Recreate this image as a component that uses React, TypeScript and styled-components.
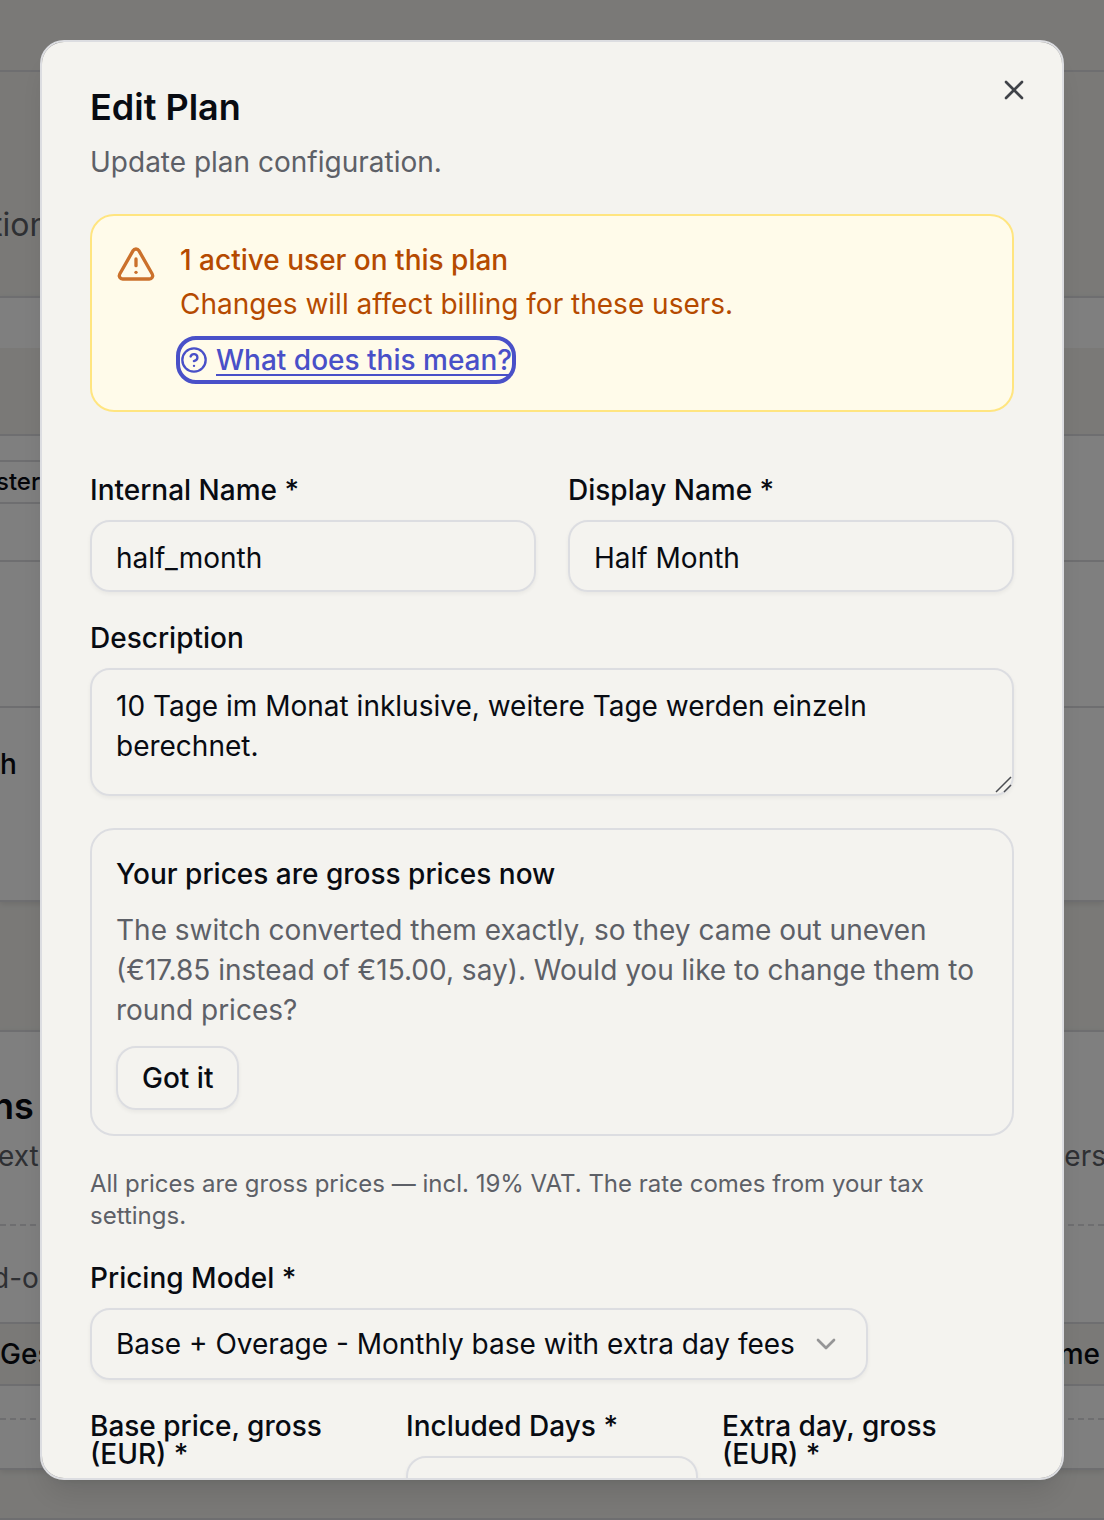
import React from "react";
import styled, { createGlobalStyle, css } from "styled-components";
import { ChevronDown, CircleHelp, TriangleAlert, X } from "lucide-react";

const color = {
  page: "#f4f3ef",
  card: "#ffffff",
  line: "#dcdde1",
  ink: "#080b12",
  muted: "#5d6067",
  amber: "#b54a00",
  amberIcon: "#cb712c",
  amberLine: "#ffe580",
  amberFill: "#fffbea",
  accent: "#4950c8",
};

const GlobalStyle = createGlobalStyle`
  *, *::before, *::after { box-sizing: border-box; }
  body {
    margin: 0;
    background: ${color.page};
    color: ${color.ink};
    font-family: Inter, "Liberation Sans", sans-serif;
    font-size: 28px;
    line-height: 40px;
    overflow: hidden;
  }
  h1, h2, h3, p { margin: 0; }
  button, input, textarea, select { font: inherit; color: inherit; }
`;

/* ---------- page behind the dialog ---------- */

const Page = styled.div`
  display: flex;
  flex-direction: column;
  height: 100vh;
  overflow: hidden;
`;

const TopBar = styled.div`
  flex: none;
  height: 72px;
  border-bottom: 2px solid ${color.line};
`;

const Intro = styled.div`
  flex: none;
  display: flex;
  align-items: center;
  height: 224px;
  padding-top: 82px;
  font-size: 32px;
  color: ${color.muted};
`;

const Panel = styled.section<{ $gap?: number }>`
  flex: none;
  background: ${color.card};
  border: solid ${color.line};
  border-width: 2px 0;
  box-shadow: 0 2px 6px rgba(0, 0, 0, 0.1);
  margin-bottom: ${(p) => p.$gap ?? 0}px;
`;

const Row = styled.div<{ $h: number; $tinted?: boolean; $line?: "solid" | "dashed" }>`
  display: flex;
  align-items: center;
  justify-content: space-between;
  height: ${(p) => p.$h}px;
  background: ${(p) => (p.$tinted ? color.page : "transparent")};
  border-bottom: ${(p) => (p.$line ? `2px ${p.$line} ${color.line}` : "none")};
`;

const BadgeRow = styled(Row)`
  align-items: flex-start;
  padding-top: 24px;
`;

const AddOnRow = styled(Row)`
  padding-top: 8px;
  color: ${color.muted};
`;

const Clipped = styled.span<{ $strong?: boolean }>`
  margin-left: -8px;
  font-weight: ${(p) => (p.$strong ? 500 : 400)};
`;

const RowEnd = styled.span`
  padding-right: 4px;
  font-weight: 500;
`;

const Badge = styled.span`
  display: flex;
  align-items: center;
  height: 44px;
  width: 120px;
  margin-left: -4px;
  border: solid ${color.line};
  border-width: 2px 0;
  font-size: 24px;
  font-weight: 500;
`;

const PanelHead = styled.div`
  height: 194px;
  padding-top: 50px;
  border-bottom: 2px dashed ${color.line};
`;

const PanelTitle = styled.h2`
  margin-left: -8px;
  font-size: 36px;
  line-height: 48px;
  font-weight: 600;
`;

const PanelText = styled.div`
  display: flex;
  justify-content: space-between;
  padding-top: 6px;
  margin: 0 -2px;
  color: ${color.muted};
`;

const PageEnd = styled.div`
  flex: 1;
  border-bottom: 2px solid ${color.line};
`;

/* ---------- dialog ---------- */

const Backdrop = styled.div`
  position: fixed;
  inset: 0;
  padding: 40px;
  background: rgba(0, 0, 0, 0.5);
`;

const Dialog = styled.div`
  position: relative;
  max-height: calc(100vh - 80px);
  padding: 48px;
  display: flex;
  flex-direction: column;
  gap: 32px;
  overflow-y: auto;
  scrollbar-width: none;
  background: ${color.page};
  border: 2px solid ${color.line};
  border-radius: 24px;
  box-shadow: 0 20px 30px -6px rgba(0, 0, 0, 0.1), 0 8px 12px -8px rgba(0, 0, 0, 0.1);
`;

const Close = styled.button`
  position: absolute;
  top: 32px;
  right: 32px;
  display: flex;
  padding: 0;
  border: 0;
  background: none;
  color: #3f4248;
`;

const Header = styled.header`
  display: flex;
  flex-direction: column;
  gap: 18px;
`;

const Title = styled.h1`
  font-size: 36px;
  line-height: 34px;
  font-weight: 600;
`;

const MutedText = styled.p`
  color: ${color.muted};
`;

const Notice = styled.div`
  display: flex;
  align-items: flex-start;
  gap: 24px;
  padding: 24px 24px 30px;
  border: 2px solid ${color.amberLine};
  border-radius: 24px;
  background: ${color.amberFill};
  color: ${color.amber};
`;

const NoticeIcon = styled(TriangleAlert)`
  flex: none;
  margin-top: 4px;
  color: ${color.amberIcon};
`;

const NoticeBody = styled.div`
  display: flex;
  flex-direction: column;
  align-items: flex-start;
  gap: 4px;
`;

const Strong = styled.p`
  font-weight: 500;
`;

const HelpButton = styled.button`
  display: flex;
  align-items: center;
  gap: 8px;
  margin-top: 12px;
  padding: 0;
  border: 0;
  border-radius: 16px;
  outline: 4px solid ${color.accent};
  background: none;
  color: ${color.accent};
  font-weight: 500;

  span {
    text-decoration: underline;
    text-decoration-thickness: 2px;
    text-underline-offset: 4px;
    text-decoration-skip-ink: none;
  }
`;

const Form = styled.form`
  display: flex;
  flex-direction: column;
  gap: 32px;
  padding-top: 32px;
`;

const Columns = styled.div<{ $count: number; $gap: number }>`
  display: grid;
  grid-template-columns: repeat(${(p) => p.$count}, minmax(0, 1fr));
  gap: ${(p) => p.$gap}px;
  align-items: start;
`;

const Field = styled.div`
  display: flex;
  flex-direction: column;
  align-items: stretch;
  gap: 16px;
`;

const Label = styled.label`
  line-height: 28px;
  font-weight: 500;
`;

const control = css`
  display: block;
  width: 100%;
  margin: 0;
  border: 2px solid ${color.line};
  border-radius: 20px;
  background: transparent;
  box-shadow: 0 2px 4px rgba(0, 0, 0, 0.05);
  outline: none;
`;

const Input = styled.input`
  ${control}
  height: 72px;
  padding: 4px 24px 0;
`;

const TextArea = styled.textarea`
  ${control}
  height: 128px;
  padding: 16px 24px;
  resize: none;
`;

const AreaWrap = styled.div`
  position: relative;
`;

const Grip = styled.svg`
  position: absolute;
  right: 1px;
  bottom: 3px;
`;

const Callout = styled.section`
  display: flex;
  flex-direction: column;
  align-items: flex-start;
  gap: 16px;
  padding: 24px;
  border: 2px solid ${color.line};
  border-radius: 24px;
`;

const OutlineButton = styled.button`
  height: 64px;
  padding: 0 24px;
  border: 2px solid ${color.line};
  border-radius: 20px;
  background: transparent;
  box-shadow: 0 2px 4px rgba(0, 0, 0, 0.05);
  font-weight: 500;
`;

const Hint = styled.p`
  font-size: 24px;
  line-height: 32px;
  color: ${color.muted};
`;

const SelectWrap = styled.div`
  display: grid;
  align-self: flex-start;
  align-items: center;

  > * { grid-area: 1 / 1; }
`;

const Select = styled.select`
  ${control}
  appearance: none;
  height: 72px;
  padding: 0 71px 0 24px;
`;

const Chevron = styled(ChevronDown)`
  justify-self: end;
  margin-right: 26px;
  opacity: 0.4;
  pointer-events: none;
`;

function TextField({ id, label, value = "" }: { id: string; label: string; value?: string }) {
  return (
    <Field>
      <Label htmlFor={id}>{label}</Label>
      <Input id={id} defaultValue={value} />
    </Field>
  );
}

function PlansPage() {
  return (
    <Page aria-hidden="true">
      <TopBar />
      <Intro><Clipped>tion</Clipped></Intro>
      <Panel $gap={128}>
        <Row $h={50} />
        <Row $h={88} $tinted $line="solid" />
        <BadgeRow $h={126} $line="solid"><Badge>ster</Badge></BadgeRow>
        <Row $h={146} $line="solid" />
        <Row $h={112}><RowEnd>h</RowEnd></Row>
        <Row $h={80} />
      </Panel>
      <Panel>
        <PanelHead>
          <PanelTitle>ns</PanelTitle>
          <PanelText><span>extra</span><span>pers</span></PanelText>
        </PanelHead>
        <AddOnRow $h={98} $line="solid"><Clipped>d-on</Clipped></AddOnRow>
        <Row $h={62} $tinted $line="solid"><Strong>Gesa</Strong><RowEnd>ame</RowEnd></Row>
        <Row $h={34} $line="dashed" />
        <Row $h={48} />
      </Panel>
      <PageEnd />
    </Page>
  );
}

export default function App() {
  return (
    <>
      <GlobalStyle />
      <PlansPage />
      <Backdrop>
        <Dialog role="dialog" aria-modal="true" aria-labelledby="dialog-title">
          <Close type="button" aria-label="Close"><X size={32} /></Close>
          <Header>
            <Title id="dialog-title">Edit Plan</Title>
            <MutedText>Update plan configuration.</MutedText>
          </Header>
          <Notice>
            <NoticeIcon size={40} />
            <NoticeBody>
              <Strong>1 active user on this plan</Strong>
              <p>Changes will affect billing for these users.</p>
              <HelpButton type="button">
                <CircleHelp size={28} />
                <span>What does this mean?</span>
              </HelpButton>
            </NoticeBody>
          </Notice>
          <Form>
            <Columns $count={2} $gap={32}>
              <TextField id="internal-name" label="Internal Name *" value="half_month" />
              <TextField id="display-name" label="Display Name *" value="Half Month" />
            </Columns>
            <Field>
              <Label htmlFor="description">Description</Label>
              <AreaWrap>
                <TextArea
                  id="description"
                  defaultValue="10 Tage im Monat inklusive, weitere Tage werden einzeln berechnet."
                />
                <Grip width="18" height="18" viewBox="0 0 18 18" stroke="#4b4d52" strokeWidth="1.5">
                  <path d="M1 17 16 2M9 17l7-7" />
                </Grip>
              </AreaWrap>
            </Field>
            <Callout>
              <Strong>Your prices are gross prices now</Strong>
              <MutedText>
                The switch converted them exactly, so they came out uneven (€17.85 instead of €15.00, say).
                Would you like to change them to round prices?
              </MutedText>
              <OutlineButton type="button">Got it</OutlineButton>
            </Callout>
            <Hint>All prices are gross prices — incl. 19% VAT. The rate comes from your tax settings.</Hint>
            <Field>
              <Label htmlFor="pricing-model">Pricing Model *</Label>
              <SelectWrap>
                <Select id="pricing-model">
                  <option>Base + Overage - Monthly base with extra day fees</option>
                </Select>
                <Chevron size={32} />
              </SelectWrap>
            </Field>
            <Columns $count={3} $gap={24}>
              <TextField id="base-price" label="Base price, gross (EUR) *" />
              <TextField id="included-days" label="Included Days *" />
              <TextField id="extra-day" label="Extra day, gross (EUR) *" />
            </Columns>
          </Form>
        </Dialog>
      </Backdrop>
    </>
  );
}
